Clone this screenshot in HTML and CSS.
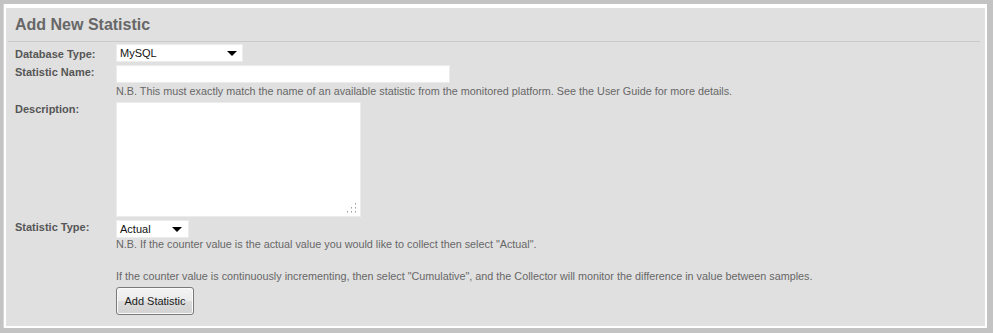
FILE: index.html
```html
<!DOCTYPE html>
<html>
<head>
<meta charset="utf-8">
<title>Add New Statistic</title>
<link rel="stylesheet" href="styles.css">
</head>
<body>
<div class="frame">
  <div class="panel">
    <h2 class="title">Add New Statistic</h2>
    <form class="form">
      <div class="row row-db">
        <label class="label">Database Type:</label>
        <div class="field">
          <div class="select select-db">
            <span class="select-text">MySQL</span>
            <span class="caret"></span>
          </div>
        </div>
      </div>
      <div class="row row-name">
        <label class="label">Statistic Name:</label>
        <div class="field">
          <input class="text-input" type="text">
          <p class="note note-name">N.B. This must exactly match the name of an available statistic from the monitored platform. See the User Guide for more details.</p>
        </div>
      </div>
      <div class="row row-desc">
        <label class="label">Description:</label>
        <div class="field">
          <div class="textarea-wrap">
            <textarea class="textarea"></textarea>
            <svg class="grip" width="11" height="11" viewBox="0 0 11 11">
              <rect x="9" y="1" width="1" height="1" fill="#a0a0a0"/>
              <rect x="9" y="2" width="1" height="1" fill="#c8c8c8"/>
              <rect x="5" y="5" width="1" height="1" fill="#a0a0a0"/>
              <rect x="9" y="5" width="1" height="1" fill="#a0a0a0"/>
              <rect x="5" y="6" width="1" height="1" fill="#c8c8c8"/>
              <rect x="9" y="6" width="1" height="1" fill="#c8c8c8"/>
              <rect x="1" y="9" width="1" height="1" fill="#a0a0a0"/>
              <rect x="5" y="9" width="1" height="1" fill="#a0a0a0"/>
              <rect x="9" y="9" width="1" height="1" fill="#a0a0a0"/>
              <rect x="1" y="10" width="1" height="1" fill="#c8c8c8"/>
              <rect x="5" y="10" width="1" height="1" fill="#c8c8c8"/>
              <rect x="9" y="10" width="1" height="1" fill="#c8c8c8"/>
            </svg>
          </div>
        </div>
      </div>
      <div class="row row-type">
        <label class="label">Statistic Type:</label>
        <div class="field">
          <div class="select select-type">
            <span class="select-text">Actual</span>
            <span class="caret"></span>
          </div>
          <p class="note note-first">N.B. If the counter value is the actual value you would like to collect then select "Actual".</p>
          <p class="note note-second">If the counter value is continuously incrementing, then select "Cumulative", and the Collector will monitor the difference in value between samples.</p>
          <button class="button" type="button">Add Statistic</button>
        </div>
      </div>
    </form>
  </div>
</div>
</body>
</html>
```

FILE: styles.css
```css
* {
  box-sizing: border-box;
}

html, body {
  height: 100%;
}

body {
  margin: 0;
  padding: 4px 6px 5px 3px;
  background: #c3c3c3;
  font-family: "Liberation Sans", Arial, sans-serif;
  font-size: 11px;
}

.frame {
  height: 100%;
  background: #ffffff;
  padding: 4px 2px 2px 2px;
  border-left: 1px solid #d6d6d6;
}

.panel {
  height: 100%;
  background: #e0e0e0;
  padding: 0 5px 0 2px;
}

.title {
  margin: 0;
  padding: 7px 0 7px 7px;
  font-size: 16px;
  line-height: 19px;
  font-weight: bold;
  color: #676767;
  border-bottom: 1px solid #cacaca;
}

.form {
  margin: 0;
  padding: 0 0 0 7px;
}

.row {
  display: grid;
  grid-template-columns: 101px auto;
  align-items: start;
}

.row-db {
  margin-top: 2px;
}

.row-name {
  margin-top: 3px;
}

.row-desc {
  margin-top: 4px;
}

.row-type {
  margin-top: 3px;
}

.label {
  font-weight: bold;
  color: #565656;
  line-height: 13px;
  padding-top: 1px;
}

.row-db .label {
  padding-top: 4px;
}

.field {
  display: flex;
  flex-direction: column;
  align-items: flex-start;
}

.select {
  position: relative;
  height: 18px;
  background: #ffffff;
  border: 1px solid #ececec;
  color: #111111;
  line-height: 17px;
  padding-left: 3px;
}

.select-db {
  width: 127px;
}

.select-type {
  width: 73px;
}

.select-text {
  font-size: 11px;
}

.caret {
  position: absolute;
  top: 6px;
  right: 5px;
  width: 0;
  height: 0;
  border-left: 5px solid transparent;
  border-right: 5px solid transparent;
  border-top: 5px solid #000000;
}

.select-type .caret {
  right: 6px;
}

.text-input {
  width: 334px;
  height: 18px;
  margin: 0;
  border: 1px solid #ececec;
  background: #ffffff;
  padding: 0 3px;
  font-family: inherit;
  font-size: 11px;
}

.note {
  margin: 0;
  color: #676767;
  font-size: 10.8px;
  line-height: 13px;
  white-space: nowrap;
}

.note-name {
  margin-top: 2px;
}

.note-first {
  margin-top: 0;
}

.note-second {
  margin-top: 19px;
}

.textarea-wrap {
  position: relative;
  width: 245px;
  height: 115px;
}

.textarea {
  display: block;
  width: 245px;
  height: 115px;
  margin: 0;
  border: 1px solid #ececec;
  background: #ffffff;
  resize: none;
  font-family: inherit;
  font-size: 11px;
}

.grip {
  position: absolute;
  right: 4px;
  bottom: 4px;
}

.button {
  margin-top: 4px;
  width: 78px;
  height: 28px;
  padding: 0;
  border: 1px solid #7a7a7a;
  border-radius: 3px;
  background: linear-gradient(#f4f4f4 0%, #ebebeb 50%, #dcdcdc 51%, #d2d2d2 100%);
  box-shadow: inset 0 0 0 1px #fafafa;
  font-family: inherit;
  font-size: 11px;
  color: #1a1a1a;
}
```
